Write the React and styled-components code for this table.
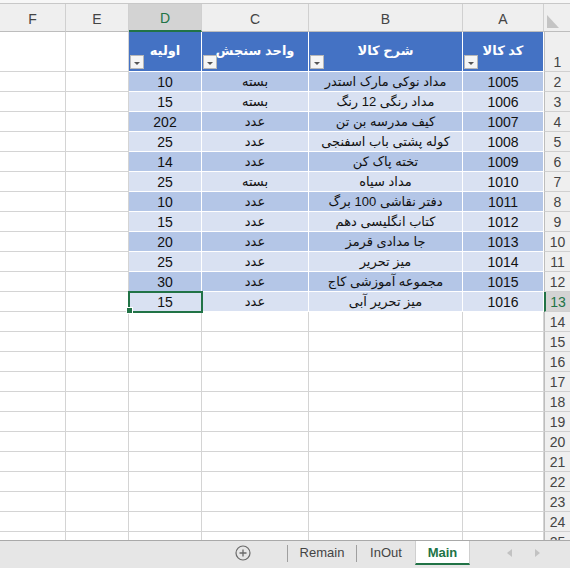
import React from "react";
import styled, { createGlobalStyle, css } from "styled-components";

const GlobalStyle = createGlobalStyle`
  html, body {
    margin: 0;
    padding: 0;
    background: #fff;
  }
  body {
    font-family: "Liberation Sans", "DejaVu Sans", sans-serif;
  }
`;

const GREEN = "#217346";
const GRID = "#d4d4d4";

const Window = styled.div`
  width: 570px;
  height: 568px;
  display: flex;
  flex-direction: column;
  overflow: hidden;
  background: #fff;
`;

const TopStrip = styled.div`
  height: 3px;
  background: #f7f7f7;
  border-bottom: 1px solid #c8c8c8;
  flex: none;
`;

const Sheet = styled.div`
  flex: 1;
  overflow: hidden;
  display: grid;
  grid-template-columns: 66px 63px 73px 107px 154px 81px 26px;
  grid-template-rows: 28px 40px;
  grid-auto-rows: 20px;
  align-content: start;
`;

const ColHead = styled.div`
  box-sizing: border-box;
  display: flex;
  align-items: center;
  justify-content: center;
  background: #efefef;
  border-right: 1px solid #d0d0d0;
  border-bottom: 1px solid #bdbdbd;
  color: #444;
  font-size: 14px;
  padding-top: 2px;
  ${(p) =>
    p.$selected &&
    css`
      background: #d3d3d3;
      color: ${GREEN};
      border-bottom: 2px solid ${GREEN};
    `}
`;

const Corner = styled.div`
  box-sizing: border-box;
  background: #efefef;
  border-bottom: 1px solid #bdbdbd;
  display: flex;
  align-items: flex-end;
  padding: 0 0 3px 3px;
`;

const RowHead = styled.div`
  box-sizing: border-box;
  display: flex;
  align-items: flex-end;
  justify-content: center;
  padding-bottom: 1px;
  background: #efefef;
  border-bottom: 1px solid #d0d0d0;
  border-left: 1px solid #bdbdbd;
  color: #444;
  font-size: 14px;
  ${(p) =>
    p.$selected &&
    css`
      background: #d3d3d3;
      color: ${GREEN};
      border-left: 2px solid ${GREEN};
    `}
`;

const tones = {
  none: css`
    background: #fff;
    border-right: 1px solid ${GRID};
    border-bottom: 1px solid ${GRID};
  `,
  head: css`
    background: #4472c4;
    color: #fff;
    font-weight: bold;
    border-right: 1px solid #fff;
    border-bottom: 1px solid #fff;
  `,
  dark: css`
    background: #b4c6e7;
    border-right: 1px solid #fff;
    border-bottom: 1px solid #fff;
  `,
  light: css`
    background: #d9e1f2;
    border-right: 1px solid #fff;
    border-bottom: 1px solid #fff;
  `,
};

const Cell = styled.div`
  box-sizing: border-box;
  position: relative;
  display: flex;
  align-items: center;
  justify-content: center;
  direction: rtl;
  white-space: nowrap;
  font-size: ${(p) => (p.$num ? 14 : 13)}px;
  color: #111;
  ${(p) => tones[p.$tone]}
  ${(p) =>
    p.$active &&
    css`
      z-index: 2;
      outline: 2px solid ${GREEN};
      outline-offset: -1px;
      &::after {
        content: "";
        position: absolute;
        left: -3px;
        bottom: -3px;
        width: 5px;
        height: 5px;
        background: ${GREEN};
        border: 1px solid #fff;
      }
    `}
`;

const HeadText = styled.span`
  font-size: 13px;
  padding-bottom: 2px;
`;

const FilterButton = styled.span`
  position: absolute;
  left: 1px;
  bottom: 2px;
  width: 14px;
  height: 14px;
  box-sizing: border-box;
  background: #f5f5f5;
  border: 1px solid #b8b8b8;
  display: flex;
  align-items: flex-end;
  justify-content: center;
  padding-bottom: 3px;

  &::before {
    content: "";
    border-left: 3px solid transparent;
    border-right: 3px solid transparent;
    border-top: 3px solid #555;
  }
`;

const TabBar = styled.div`
  flex: none;
  height: 28px;
  box-sizing: border-box;
  border-top: 1px solid #a9a9a9;
  background: #e6e6e6;
  display: flex;
  align-items: flex-start;
  font-size: 13px;
  color: #444;
`;

const AddButton = styled.div`
  margin-left: 231px;
  width: 24px;
  height: 24px;
  display: flex;
  align-items: center;
  justify-content: center;
`;

const Divider = styled.div`
  width: 1px;
  height: 17px;
  margin-top: 4px;
  background: #9f9f9f;
  margin-left: ${(p) => p.$gap || 0}px;
`;

const Tab = styled.div`
  box-sizing: border-box;
  width: ${(p) => p.$w}px;
  height: 24px;
  display: flex;
  align-items: center;
  justify-content: center;
  padding-bottom: 1px;
  ${(p) =>
    p.$active &&
    css`
      background: #fff;
      color: ${GREEN};
      font-weight: bold;
      border-bottom: 2px solid ${GREEN};
      border-left: 1px solid #cfcfcf;
      border-right: 1px solid #cfcfcf;
      padding-bottom: 0;
    `}
`;

const Nav = styled.div`
  margin-left: 37px;
  height: 24px;
  display: flex;
  align-items: center;
  gap: 23px;
`;

const rows = [
  ["1005", "مداد نوکی مارک استدر", "بسته", "10"],
  ["1006", "مداد رنگی 12 رنگ", "بسته", "15"],
  ["1007", "کیف مدرسه بن تن", "عدد", "202"],
  ["1008", "کوله پشتی باب اسفنجی", "عدد", "25"],
  ["1009", "تخته پاک کن", "عدد", "14"],
  ["1010", "مداد سیاه", "بسته", "25"],
  ["1011", "دفتر نقاشی 100 برگ", "عدد", "10"],
  ["1012", "کتاب انگلیسی دهم", "عدد", "15"],
  ["1013", "جا مدادی قرمز", "عدد", "20"],
  ["1014", "میز تحریر", "عدد", "25"],
  ["1015", "مجموعه آموزشی کاج", "عدد", "30"],
  ["1016", "میز تحریر آبی", "عدد", "15"],
];

const headers = ["کد کالا", "شرح کالا", "واحد سنجش", "اولیه"];
const letters = ["F", "E", "D", "C", "B", "A"];
const TOTAL_ROWS = 25;
const ACTIVE_ROW = 13;

function PlusIcon() {
  return (
    <svg width="16" height="16" viewBox="0 0 16 16">
      <circle cx="8" cy="8" r="7" fill="none" stroke="#6a6a6a" strokeWidth="1.2" />
      <path d="M8 4.5v7M4.5 8h7" stroke="#6a6a6a" strokeWidth="1.3" />
    </svg>
  );
}

function Arrow({ dir }) {
  return (
    <svg width="5" height="8" viewBox="0 0 5 8">
      {dir === "left" ? (
        <path d="M5 0L0 4l5 4z" fill="#c2c2c2" />
      ) : (
        <path d="M0 0l5 4-5 4z" fill="#c2c2c2" />
      )}
    </svg>
  );
}

function SheetRow({ n }) {
  const cells = [];
  // columns left to right: F E D C B A
  if (n === 1) {
    cells.push(<Cell key="F" $tone="none" />, <Cell key="E" $tone="none" />);
    [3, 2, 1, 0].forEach((i) =>
      cells.push(
        <Cell key={i} $tone="head">
          <HeadText>{headers[i]}</HeadText>
          <FilterButton />
        </Cell>
      )
    );
  } else if (n <= 13) {
    const r = rows[n - 2];
    const tone = n % 2 === 0 ? "dark" : "light";
    cells.push(<Cell key="F" $tone="none" />, <Cell key="E" $tone="none" />);
    [3, 2, 1, 0].forEach((i) =>
      cells.push(
        <Cell
          key={i}
          $tone={tone}
          $num={i === 0 || i === 3}
          $active={i === 3 && n === ACTIVE_ROW}
        >
          {r[i]}
        </Cell>
      )
    );
  } else {
    letters.forEach((l) => cells.push(<Cell key={l} $tone="none" />));
  }
  cells.push(
    <RowHead key="rh" $selected={n === ACTIVE_ROW}>
      {n}
    </RowHead>
  );
  return cells;
}

export default function App() {
  return (
    <>
      <GlobalStyle />
      <Window>
        <TopStrip />
        <Sheet>
          {letters.map((l) => (
            <ColHead key={l} $selected={l === "D"}>
              {l}
            </ColHead>
          ))}
          <Corner>
            <svg width="12" height="13" viewBox="0 0 12 13">
              <path d="M0 0v13h12z" fill="#c4c4c4" />
            </svg>
          </Corner>
          {Array.from({ length: TOTAL_ROWS }, (_, i) => (
            <SheetRow key={i} n={i + 1} />
          ))}
        </Sheet>
        <TabBar>
          <AddButton>
            <PlusIcon />
          </AddButton>
          <Divider $gap={32} />
          <Tab $w={68}>Remain</Tab>
          <Divider />
          <Tab $w={58}>InOut</Tab>
          <Tab $w={55} $active>
            Main
          </Tab>
          <Nav>
            <Arrow dir="left" />
            <Arrow dir="right" />
          </Nav>
        </TabBar>
      </Window>
    </>
  );
}
